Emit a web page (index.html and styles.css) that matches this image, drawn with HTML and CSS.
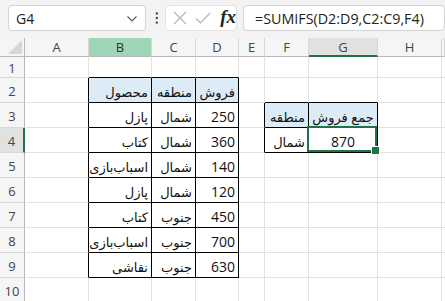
FILE: index.html
```html
<!DOCTYPE html>
<html lang="fa">
<head>
<meta charset="utf-8">
<title>Sheet</title>
<link rel="stylesheet" href="styles.css">
</head>
<body>
<div class="app">
  <div class="fbar">
    <div class="namebox">
      <span class="ref">G4</span>
      <svg class="chev" width="10" height="6" viewBox="0 0 10 6"><polyline points="0.5,0.5 5,5 9.5,0.5" fill="none" stroke="#555" stroke-width="1.1"/></svg>
    </div>
    <svg class="dots" width="4" height="14" viewBox="0 0 4 14"><circle cx="2" cy="2" r="1.3" fill="#444"/><circle cx="2" cy="7" r="1.3" fill="#444"/><circle cx="2" cy="12" r="1.3" fill="#444"/></svg>
    <div class="fxbox">
      <svg class="ico" width="14" height="14" viewBox="0 0 14 14"><path d="M1 1 L13 13 M13 1 L1 13" stroke="#b5b5b5" stroke-width="1.2" fill="none"/></svg>
      <svg class="ico" width="16" height="14" viewBox="0 0 16 14"><path d="M1 7.5 L5.5 12 L15 2" stroke="#b5b5b5" stroke-width="1.2" fill="none"/></svg>
      <span class="fx">fx</span>
    </div>
    <div class="formula">=SUMIFS(D2:D9,C2:C9,F4)</div>
  </div>
  <div class="sheet">
    <div class="corner"><svg width="14" height="14" viewBox="0 0 14 14"><polygon points="14,0 14,14 0,14" fill="#d6d6d6"/></svg></div>
    <div class="ch">A</div>
    <div class="ch chsel">B</div>
    <div class="ch">C</div>
    <div class="ch">D</div>
    <div class="ch">E</div>
    <div class="ch">F</div>
    <div class="ch chact">G</div>
    <div class="ch">H</div>
    <div class="ch"></div>

    <div class="rh">1</div>
    <div class="c"></div><div class="c bb"></div><div class="c bb"></div><div class="c bb"></div><div class="c"></div><div class="c"></div><div class="c"></div><div class="c"></div><div class="c"></div>

    <div class="rh">2</div>
    <div class="c br"></div>
    <div class="c br bb hd r ar">محصول</div>
    <div class="c br bb hd r ar">منطقه</div>
    <div class="c br bb hd r ar">فروش</div>
    <div class="c"></div><div class="c bb"></div><div class="c bb"></div><div class="c"></div><div class="c"></div>

    <div class="rh">3</div>
    <div class="c br"></div>
    <div class="c br bb r ar">پازل</div>
    <div class="c br bb r ar">شمال</div>
    <div class="c br bb r">250</div>
    <div class="c br"></div>
    <div class="c br bb hd r ar">منطقه</div>
    <div class="c br bb hd ctr ar">جمع فروش</div>
    <div class="c"></div><div class="c"></div>

    <div class="rh rhact">4</div>
    <div class="c br"></div>
    <div class="c br bb r ar">کتاب</div>
    <div class="c br bb r ar">شمال</div>
    <div class="c br bb r">360</div>
    <div class="c br"></div>
    <div class="c br bb r ar">شمال</div>
    <div class="c br bb ctr sel">870</div>
    <div class="c"></div><div class="c"></div>

    <div class="rh">5</div>
    <div class="c br"></div>
    <div class="c br bb r ar">اسباب‌بازی</div>
    <div class="c br bb r ar">شمال</div>
    <div class="c br bb r">140</div>
    <div class="c"></div><div class="c"></div><div class="c"></div><div class="c"></div><div class="c"></div>

    <div class="rh">6</div>
    <div class="c br"></div>
    <div class="c br bb r ar">پازل</div>
    <div class="c br bb r ar">شمال</div>
    <div class="c br bb r">120</div>
    <div class="c"></div><div class="c"></div><div class="c"></div><div class="c"></div><div class="c"></div>

    <div class="rh">7</div>
    <div class="c br"></div>
    <div class="c br bb r ar">کتاب</div>
    <div class="c br bb r ar">جنوب</div>
    <div class="c br bb r">450</div>
    <div class="c"></div><div class="c"></div><div class="c"></div><div class="c"></div><div class="c"></div>

    <div class="rh">8</div>
    <div class="c br"></div>
    <div class="c br bb r ar">اسباب‌بازی</div>
    <div class="c br bb r ar">جنوب</div>
    <div class="c br bb r">700</div>
    <div class="c"></div><div class="c"></div><div class="c"></div><div class="c"></div><div class="c"></div>

    <div class="rh">9</div>
    <div class="c br"></div>
    <div class="c br bb r ar">نقاشی</div>
    <div class="c br bb r ar">جنوب</div>
    <div class="c br bb r">630</div>
    <div class="c"></div><div class="c"></div><div class="c"></div><div class="c"></div><div class="c"></div>

    <div class="rh">10</div>
    <div class="c"></div><div class="c"></div><div class="c"></div><div class="c"></div><div class="c"></div><div class="c"></div><div class="c"></div><div class="c"></div><div class="c"></div>
  </div>
</div>
</body>
</html>
```
FILE: styles.css
```css
* { box-sizing: border-box; }
html, body { margin: 0; padding: 0; }
body {
  width: 445px;
  height: 301px;
  overflow: hidden;
  background: #ffffff;
  font-family: "Open Sans", "DejaVu Sans", sans-serif;
}
.app { width: 445px; height: 301px; overflow: hidden; }

.fbar {
  height: 38px;
  background: #f3f3f3;
  display: flex;
  align-items: flex-start;
  padding: 5px 0 0 8px;
  white-space: nowrap;
}
.namebox {
  width: 149px;
  height: 26px;
  background: #fff;
  border: 1px solid #d4d4d4;
  border-radius: 4px;
  display: flex;
  align-items: center;
  justify-content: space-between;
  padding: 0 8px 0 7px;
  font-size: 14px;
  color: #222;
}
.chev { margin-top: 1px; }
.dots { margin: 6px 0 0 9px; }
.fxbox {
  margin-left: 7px;
  width: 73px;
  height: 26px;
  background: #fff;
  border: 1px solid #e3e3e3;
  border-radius: 4px;
  display: flex;
  align-items: center;
  gap: 8px;
  padding-left: 7px;
}
.fx {
  font-family: "Liberation Serif", "DejaVu Serif", serif;
  font-style: italic;
  font-weight: bold;
  font-size: 19px;
  color: #222;
  margin-left: 1px;
  margin-top: -2px;
}
.formula {
  margin-left: 6px;
  width: 220px;
  height: 26px;
  background: #fff;
  border: 1px solid #d4d4d4;
  border-radius: 4px;
  display: flex;
  align-items: center;
  padding-left: 11px;
  font-size: 14.3px;
  color: #222;
}

.sheet {
  display: grid;
  grid-template-columns: 25px 64px 63px 44px 43px 26px 44px 69px 64px 3px;
  grid-template-rows: 19px 21px repeat(9, 25px);
}
.corner, .ch, .rh {
  background: #f5f5f5;
  color: #444;
  font-size: 13px;
  display: flex;
  align-items: center;
  justify-content: center;
}
.corner {
  border-right: 1px solid #b8b8b8;
  border-bottom: 1px solid #b8b8b8;
  align-items: flex-end;
  justify-content: flex-end;
  padding: 0 2px 2px 0;
}
.ch {
  border-right: 1px solid #d8d8d8;
  border-bottom: 1px solid #b8b8b8;
}
.chsel { background: #a0d6b8; color: #333; }
.chact { background: #e1e1e1; border-bottom: 2px solid #217346; }
.rh {
  border-right: 1px solid #b8b8b8;
  border-bottom: 1px solid #d8d8d8;
  padding-top: 1px;
}
.rhact { background: #e1e1e1; border-right: 2px solid #217346; }

.c {
  border-right: 1px solid #e1e1e1;
  border-bottom: 1px solid #e1e1e1;
  display: flex;
  align-items: center;
  padding: 2px 3px 0;
  font-size: 14px;
  color: #111;
  white-space: nowrap;
}
.ar { font-size: 13px; padding-top: 3px; }
.r { justify-content: flex-end; }
.ctr { justify-content: center; }
.hd { background: #ddebf7; }
.br { border-right-color: #000; }
.bb { border-bottom-color: #000; }
.sel { position: relative; z-index: 2; }
.sel::after {
  content: "";
  position: absolute;
  top: -2px;
  left: -2px;
  right: 0;
  bottom: 0;
  border: 2px solid #217346;
}
.sel::before {
  content: "";
  position: absolute;
  right: -3px;
  bottom: -3px;
  width: 7px;
  height: 7px;
  background: #217346;
  border: 1px solid #fff;
  z-index: 3;
}
```
